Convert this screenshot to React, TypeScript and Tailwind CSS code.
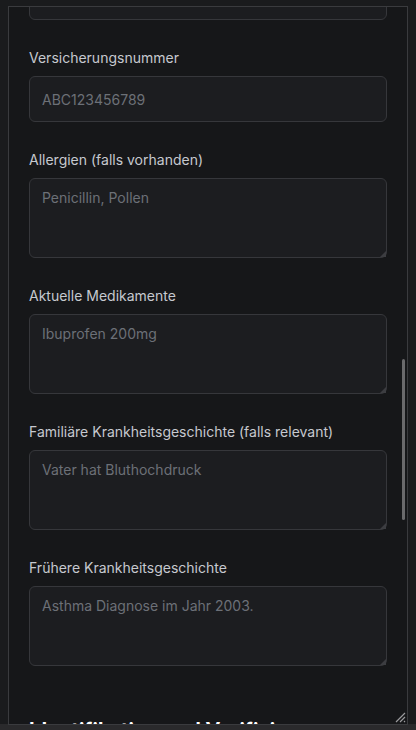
import React from "react";

const font = { fontFamily: "Inter, 'Noto Sans', sans-serif" };

function Label({ children }: { children: React.ReactNode }) {
  return (
    <label className="block text-[14px] leading-[20px] text-[#c6c9cf] mb-2">
      {children}
    </label>
  );
}

function Area({ placeholder }: { placeholder: string }) {
  return (
    <div className="relative">
      <textarea
        placeholder={placeholder}
        className="block w-full h-[80px] rounded-md border border-[#36373b] bg-[#1c1d20] px-3 py-[9px] text-[14px] leading-[20px] text-[#d0d2d6] placeholder:text-[#6c7077] outline-none resize-none"
        style={font}
      />
      <svg className="absolute right-[1px] bottom-[1px] pointer-events-none" width="6" height="6" viewBox="0 0 6 6">
        <path d="M6 0 L6 6 L0 6 Z" fill="#3c3d41" />
      </svg>
    </div>
  );
}

export default function App() {
  const fields = [
    ["Allergien (falls vorhanden)", "Penicillin, Pollen"],
    ["Aktuelle Medikamente", "Ibuprofen 200mg"],
    ["Familiäre Krankheitsgeschichte (falls relevant)", "Vater hat Bluthochdruck"],
    ["Frühere Krankheitsgeschichte", "Asthma Diagnose im Jahr 2003."],
  ];
  return (
    <div className="h-[730px] w-[416px] bg-[#1a1b1d] flex flex-col overflow-hidden" style={font}>
      <div className="pt-[6px] px-[8px] flex-1 min-h-0">
        <div className="relative h-[719px] w-[400px] border border-[#3a3b3e] bg-[#161719] overflow-hidden">
          <div className="px-5 -mt-[35px] flex flex-col gap-7">
            <div className="h-[48px] rounded-md border border-[#36373b] bg-[#1c1d20]" />
            <div>
              <Label>Versicherungsnummer</Label>
              <input
                placeholder="ABC123456789"
                className="block w-full h-[46px] rounded-md border border-[#36373b] bg-[#1c1d20] px-3 text-[14px] text-[#d0d2d6] placeholder:text-[#6c7077] outline-none"
                style={font}
              />
            </div>
            {fields.map(([l, p]) => (
              <div key={l}>
                <Label>{l}</Label>
                <Area placeholder={p} />
              </div>
            ))}
            <h2 className="mt-[22px] text-[20px] leading-[28px] font-bold text-white">
              Identifikation und Verifizierung
            </h2>
          </div>
          <div className="absolute right-[2px] top-[352px] h-[161px] w-[3px] rounded-full bg-[#6a6a6c]" />
          <svg className="absolute right-[1px] bottom-[1px]" width="12" height="12" viewBox="0 0 12 12">
            <path d="M11 2 L2 11 M11 6 L6 11 M11 10 L10 11" stroke="#9a9a9c" strokeWidth="1.2" />
          </svg>
        </div>
      </div>
      <div className="h-[6px] bg-[#2a2a2c] shrink-0" />
    </div>
  );
}
